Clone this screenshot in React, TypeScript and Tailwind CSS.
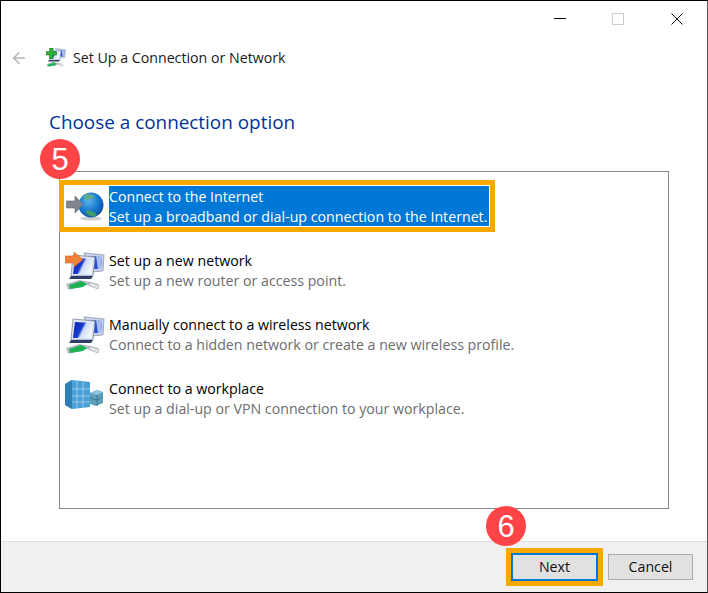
import { ArrowLeft } from "lucide-react"

const font = { fontFamily: '"Open Sans", "Noto Sans", sans-serif' }

function Monitors({ id }: { id: string }) {
  return (
    <>
      <defs>
        <linearGradient id={id} x1="0" y1="0" x2="1" y2="0.4">
          <stop offset="0" stopColor="#0a1fb0" />
          <stop offset="0.5" stopColor="#1a3ccc" />
          <stop offset="0.62" stopColor="#cfdcf6" />
          <stop offset="1" stopColor="#f2f6fd" />
        </linearGradient>
      </defs>
      {/* back monitor */}
      <path d="M19 1 L39 3 L38 19 L25 20 Z" fill="#c8d4ea" stroke="#8b97ad" strokeWidth="0.8" />
      <path d="M27 4 L37 5 L36 17 L27 17 Z" fill="#2d4fd0" />
      <path d="M31 4 L37 5 L36 17 L33 17 Z" fill="#a8bef0" />
      {/* front monitor */}
      <path d="M8 3 L30 5 L28 24 L6 24 Z" fill="#dfe5f0" stroke="#7c889e" strokeWidth="0.8" />
      <path d="M10 6 L28 7 L26 22 L8 22 Z" fill={`url(#${id})`} />
      <path d="M6 24 L28 24 L26 27 L4 27 Z" fill="#2e3d63" />
      {/* cable */}
      <path d="M1 32 L14 28 L20 29 L33 32 L32 36 L22 33 L16 35 L3 38 Z" fill="#b9bec6" />
      <path d="M4 33 L16 29 L22 32 L18 35 L5 37 Z" fill="#1fb155" />
      <path d="M24 30 L34 33 L33 37 L25 34 Z" fill="#dfe3e8" stroke="#8c929c" strokeWidth="0.5" />
    </>
  )
}

function NewNetworkIcon() {
  return (
    <svg width="40" height="40" viewBox="0 -1 40 40">
      <Monitors id="m1" />
      <path d="M0 4 H9 V0 L18 7.5 L9 15 V11 H0 Z" fill="#f0813a" stroke="#d8681f" strokeWidth="0.6" />
    </svg>
  )
}

function WirelessIcon() {
  return (
    <svg width="40" height="40" viewBox="0 -1 40 40">
      <Monitors id="m2" />
    </svg>
  )
}

function SmallNetworkIcon() {
  return (
    <svg width="20" height="20" viewBox="0 0 40 40">
      <Monitors id="m3" />
      <path d="M7 0 H14 V7 H21 V14 H14 V21 H7 V14 H0 V7 H7 Z" fill="#2fae3a" stroke="#16781f" strokeWidth="1" />
    </svg>
  )
}

function GlobeIcon() {
  return (
    <svg width="38" height="30" viewBox="0 0 38 30">
      <defs>
        <radialGradient id="g" cx="0.4" cy="0.35" r="0.75">
          <stop offset="0" stopColor="#5cb4ee" />
          <stop offset="0.6" stopColor="#1272c8" />
          <stop offset="1" stopColor="#0a3f8e" />
        </radialGradient>
      </defs>
      <ellipse cx="25" cy="27.5" rx="11" ry="2" fill="#d0d0d0" />
      <circle cx="25" cy="14" r="12.5" fill="url(#g)" />
      <path d="M18 4 C22 2 27 3 29 6 C26 8 23 8 20 10 C18 9 17 7 18 4 Z" fill="#66b080" opacity="0.8" />
      <path d="M19 20 C23 18 28 20 31 24 C27 27 22 26 19 20 Z" fill="#3f9a70" />
      <path d="M0.5 10 H9 V5 L17 13.5 L9 22 V17 H0.5 Z" fill="#80858e" stroke="#62666e" strokeWidth="0.6" />
    </svg>
  )
}

function BuildingIcon() {
  return (
    <svg width="40" height="40" viewBox="0 -1 40 40">
      <path d="M0 4 L7 0 L25 2 L25 27 L7 29 L0 25 Z" fill="#4aa0d4" />
      <path d="M0 4 L7 0 V29 L0 25 Z" fill="#2e7fb6" />
      <path d="M12 1 V28 M18 2 V28 M7 9 H25 M7 16 H25 M7 22 H25" stroke="#a6d6f0" strokeWidth="0.8" />
      <path d="M25 13 L32 10 L38 12 V23 L31 26 L25 24 Z" fill="#5f9fb8" />
      <path d="M25 13 L32 15 L38 12 L32 10 Z" fill="#8cc4dc" />
      <path d="M32 15 V26 M25 18 L32 20 L38 17" stroke="#2f6f8c" strokeWidth="0.8" fill="none" />
    </svg>
  )
}

const options = [
  { title: "Set up a new network", desc: "Set up a new router or access point.", icon: <NewNetworkIcon /> },
  { title: "Manually connect to a wireless network", desc: "Connect to a hidden network or create a new wireless profile.", icon: <WirelessIcon /> },
  { title: "Connect to a workplace", desc: "Set up a dial-up or VPN connection to your workplace.", icon: <BuildingIcon /> },
]

function Badge({ n, className }: { n: string; className: string }) {
  return (
    <div
      className={`absolute w-10 h-10 rounded-full bg-[#ff4448] text-white flex items-center justify-center text-[31px] leading-none ${className}`}
      style={{ fontFamily: '"Liberation Sans", sans-serif' }}
    >
      {n}
    </div>
  )
}

export default function App() {
  return (
    <div className="relative w-[708px] h-[593px] bg-white border border-black border-r-[#555] flex flex-col text-[14.2px] leading-5 text-black overflow-hidden" style={font}>
      {/* Title bar */}
      <div className="h-[39px] flex items-start justify-end shrink-0">
        <div className="w-[12px] h-px bg-black mt-[17px] mr-[46px]" />
        <div className="w-3 h-3 border border-[#cccccc] mt-[12px] mr-[47px]" />
        <svg width="12" height="12" viewBox="0 0 12 12" className="mt-[12px] mr-[24px]">
          <path d="M0.5 0.5 L11.5 11.5 M11.5 0.5 L0.5 11.5" stroke="#111" strokeWidth="1" />
        </svg>
      </div>

      {/* Header */}
      <div className="h-[36px] flex items-center shrink-0 pl-[9px]">
        <ArrowLeft className="w-[18px] h-[18px] text-[#b4b4b4]" strokeWidth={2} />
        <div className="ml-[18px]"><SmallNetworkIcon /></div>
        <span className="ml-[7px] text-[#1a1a1a]">Set Up a Connection or Network</span>
      </div>

      <h1 className="ml-[48px] mt-[32px] text-[18.9px] leading-7 text-[#003399] shrink-0">Choose a connection option</h1>

      {/* Option list */}
      <div className="ml-[58px] mt-[35px] w-[610px] h-[338px] border border-[#828790] shrink-0">
        <div className="mt-[8px] -ml-px w-[436px] h-[52px] border-[5px] border-[#f9a800] flex items-center">
          <div className="w-[39px] ml-[2px] shrink-0"><GlobeIcon /></div>
          <div className="bg-[#0078d7] text-white ml-[4px] w-[380px] h-[40px] pt-px whitespace-nowrap">
            <div>Connect to the Internet</div>
            <div>Set up a broadband or dial-up connection to the Internet.</div>
          </div>
        </div>
        <div className="ml-[5px] mt-[19px] flex flex-col gap-[24px]">
          {options.map((o) => (
            <div key={o.title} className="flex items-center h-[40px]">
              <div className="w-[44px] shrink-0">{o.icon}</div>
              <div className="whitespace-nowrap">
                <div>{o.title}</div>
                <div className="text-[#6d6d6d]">{o.desc}</div>
              </div>
            </div>
          ))}
        </div>
      </div>

      {/* Footer */}
      <div className="mt-auto h-[51px] bg-[#f0f0f0] border-t border-[#dfdfdf] flex items-center justify-end pr-[14px] shrink-0">
        <div className="border-[5px] border-[#f9a800]">
          <button className="w-[87px] h-[28px] bg-[#e1e1e1] border-2 border-[#0078d7] text-[#111]">Next</button>
        </div>
        <button className="ml-[5px] w-[85px] h-[26px] bg-[#e1e1e1] border border-[#adadad] text-[#111]">Cancel</button>
      </div>

      <Badge n="5" className="left-[39px] top-[138px]" />
      <Badge n="6" className="left-[485px] top-[505px]" />
    </div>
  )
}
